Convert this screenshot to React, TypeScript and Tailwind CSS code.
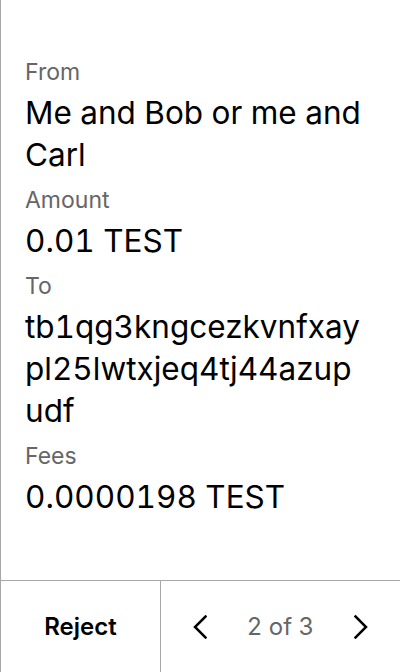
import { ReactNode } from 'react'

function Field({ label, children, breakAll }: { label: string; children: ReactNode; breakAll?: boolean }) {
  return (
    <div className="flex flex-col">
      <div className="text-[23px] leading-[30px] text-[#666666]">{label}</div>
      <div
        className={`mt-[5px] text-[31.5px] leading-[42px] text-black tabular-nums ${
          breakAll ? 'break-all' : ''
        }`}
      >
        {children}
      </div>
    </div>
  )
}

function Chevron({ dir }: { dir: 'left' | 'right' }) {
  return (
    <svg width="14" height="24" viewBox="0 0 14 24" fill="none">
      <path
        d={dir === 'left' ? 'M12.5 1.5 L2 12 L12.5 22.5' : 'M1.5 1.5 L12 12 L1.5 22.5'}
        stroke="#000"
        strokeWidth="2.5"
        strokeLinecap="square"
        strokeLinejoin="miter"
      />
    </svg>
  )
}

export default function App() {
  return (
    <div
      className="h-[672px] w-[400px] flex flex-col bg-white border-l border-[#a8a8a8]"
      style={{ fontFamily: 'Inter, "Noto Sans", sans-serif' }}
    >
      {/* Details */}
      <div className="flex-1 flex flex-col gap-[9px] pl-6 pr-[30px] pt-[57px]">
        <Field label="From">Me and Bob or me and Carl</Field>
        <Field label="Amount">0.01 TEST</Field>
        <Field label="To" breakAll>
          tb1qg3kngcezkvnfxaypl25lwtxjeq4tj44azupudf
        </Field>
        <Field label="Fees">0.0000198 TEST</Field>
      </div>

      {/* Footer */}
      <div className="h-[92px] flex border-t border-[#a8a8a8]">
        <button className="w-[160px] flex items-center justify-center text-[24px] font-semibold text-black border-r border-[#a8a8a8]">
          Reject
        </button>
        <div className="flex-1 flex items-center justify-between px-8">
          <button className="flex items-center">
            <Chevron dir="left" />
          </button>
          <span className="text-[24px] text-[#666666] tabular-nums">2 of 3</span>
          <button className="flex items-center">
            <Chevron dir="right" />
          </button>
        </div>
      </div>
    </div>
  )
}
